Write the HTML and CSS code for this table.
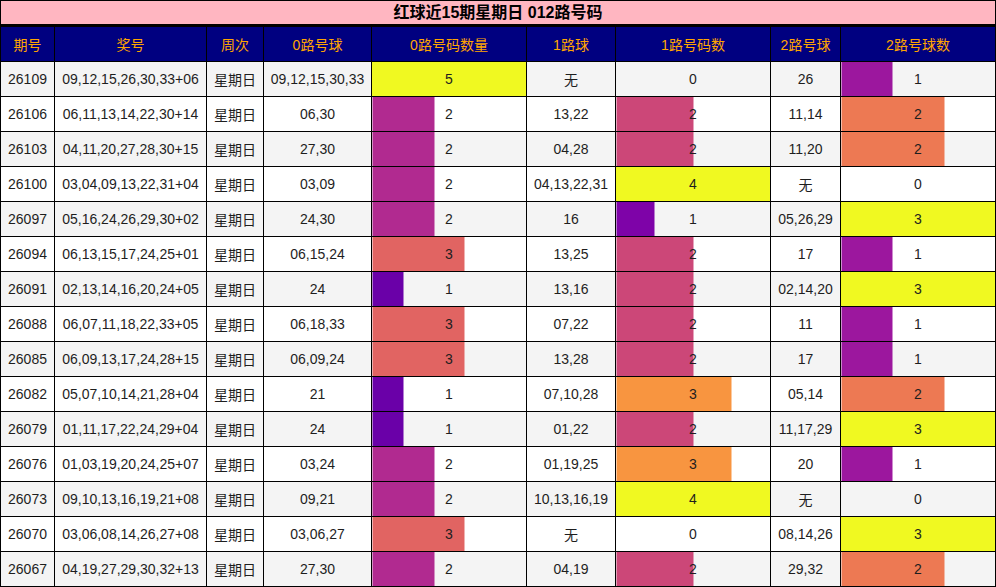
FILE: index.html
```html
<!DOCTYPE html>
<html lang="zh">
<head>
<meta charset="utf-8">
<title>红球近15期星期日 012路号码</title>
<link rel="stylesheet" href="styles.css">
</head>
<body>
<table class="grid">
  <colgroup>
    <col class="w-qh"><col class="w-jh"><col class="w-zc"><col class="w-b0">
    <col class="w-n0"><col class="w-b1"><col class="w-n1"><col class="w-b2"><col class="w-n2">
  </colgroup>
  <thead>
    <tr class="title-row"><th colspan="9">红球近15期星期日 012路号码</th></tr>
    <tr class="head-row">
      <th>期号</th><th>奖号</th><th>周次</th><th>0路号球</th><th>0路号码数量</th><th>1路球</th><th>1路号码数</th><th>2路号球</th><th>2路号球数</th>
    </tr>
  </thead>
  <tbody>
    <tr><td>26109</td><td>09,12,15,26,30,33+06</td><td>星期日</td><td>09,12,15,30,33</td><td class="bar p100">5</td><td>无</td><td class="bar">0</td><td>26</td><td class="bar p33">1</td></tr>
    <tr><td>26106</td><td>06,11,13,14,22,30+14</td><td>星期日</td><td>06,30</td><td class="bar p40">2</td><td>13,22</td><td class="bar p50">2</td><td>11,14</td><td class="bar p67">2</td></tr>
    <tr><td>26103</td><td>04,11,20,27,28,30+15</td><td>星期日</td><td>27,30</td><td class="bar p40">2</td><td>04,28</td><td class="bar p50">2</td><td>11,20</td><td class="bar p67">2</td></tr>
    <tr><td>26100</td><td>03,04,09,13,22,31+04</td><td>星期日</td><td>03,09</td><td class="bar p40">2</td><td>04,13,22,31</td><td class="bar p100">4</td><td>无</td><td class="bar">0</td></tr>
    <tr><td>26097</td><td>05,16,24,26,29,30+02</td><td>星期日</td><td>24,30</td><td class="bar p40">2</td><td>16</td><td class="bar p25">1</td><td>05,26,29</td><td class="bar p100">3</td></tr>
    <tr><td>26094</td><td>06,13,15,17,24,25+01</td><td>星期日</td><td>06,15,24</td><td class="bar p60">3</td><td>13,25</td><td class="bar p50">2</td><td>17</td><td class="bar p33">1</td></tr>
    <tr><td>26091</td><td>02,13,14,16,20,24+05</td><td>星期日</td><td>24</td><td class="bar p20">1</td><td>13,16</td><td class="bar p50">2</td><td>02,14,20</td><td class="bar p100">3</td></tr>
    <tr><td>26088</td><td>06,07,11,18,22,33+05</td><td>星期日</td><td>06,18,33</td><td class="bar p60">3</td><td>07,22</td><td class="bar p50">2</td><td>11</td><td class="bar p33">1</td></tr>
    <tr><td>26085</td><td>06,09,13,17,24,28+15</td><td>星期日</td><td>06,09,24</td><td class="bar p60">3</td><td>13,28</td><td class="bar p50">2</td><td>17</td><td class="bar p33">1</td></tr>
    <tr><td>26082</td><td>05,07,10,14,21,28+04</td><td>星期日</td><td>21</td><td class="bar p20">1</td><td>07,10,28</td><td class="bar p75">3</td><td>05,14</td><td class="bar p67">2</td></tr>
    <tr><td>26079</td><td>01,11,17,22,24,29+04</td><td>星期日</td><td>24</td><td class="bar p20">1</td><td>01,22</td><td class="bar p50">2</td><td>11,17,29</td><td class="bar p100">3</td></tr>
    <tr><td>26076</td><td>01,03,19,20,24,25+07</td><td>星期日</td><td>03,24</td><td class="bar p40">2</td><td>01,19,25</td><td class="bar p75">3</td><td>20</td><td class="bar p33">1</td></tr>
    <tr><td>26073</td><td>09,10,13,16,19,21+08</td><td>星期日</td><td>09,21</td><td class="bar p40">2</td><td>10,13,16,19</td><td class="bar p100">4</td><td>无</td><td class="bar">0</td></tr>
    <tr><td>26070</td><td>03,06,08,14,26,27+08</td><td>星期日</td><td>03,06,27</td><td class="bar p60">3</td><td>无</td><td class="bar">0</td><td>08,14,26</td><td class="bar p100">3</td></tr>
    <tr><td>26067</td><td>04,19,27,29,30,32+13</td><td>星期日</td><td>27,30</td><td class="bar p40">2</td><td>04,19</td><td class="bar p50">2</td><td>29,32</td><td class="bar p67">2</td></tr>
  </tbody>
</table>
</body>
</html>
```

FILE: styles.css
```css
html, body {
  margin: 0;
  padding: 0;
  background: #fff;
}

body {
  font-family: "Liberation Sans", "Noto Sans CJK SC", sans-serif;
  font-size: 14px;
  color: #1e1e1e;
}

.grid {
  width: 996px;
  table-layout: fixed;
  border-collapse: collapse;
  border: 1px solid #000;
}

.w-qh { width: 54px; }
.w-jh { width: 152px; }
.w-zc { width: 57px; }
.w-b0 { width: 108px; }
.w-n0 { width: 155px; }
.w-b1 { width: 89px; }
.w-n1 { width: 155px; }
.w-b2 { width: 70px; }
.w-n2 { width: 155px; }

.grid th,
.grid td {
  border: 1px solid #000;
  padding: 0;
  text-align: center;
  vertical-align: middle;
  white-space: nowrap;
}

.title-row th {
  background: #ffb6c1;
  color: #000;
  font-size: 16px;
  font-weight: bold;
  line-height: 18px;
  height: 23px;
  border-bottom: 3px solid #000;
}

.head-row th {
  background: #000080;
  color: #ffa500;
  font-weight: normal;
  height: 34px;
}

.grid tbody td {
  height: 34px;
}

.grid tbody tr:nth-child(odd) td {
  background-color: #f4f4f4;
}

.grid tbody tr:nth-child(even) td {
  background-color: #fff;
}

.grid tbody td.bar {
  background-image: linear-gradient(90deg, var(--c) var(--w), transparent var(--w));
}

.p20 { --c: #6a00a8; --w: 20%; }
.p25 { --c: #7e03a8; --w: 25%; }
.p33 { --c: #9c179e; --w: 33.333%; }
.p40 { --c: #b12a90; --w: 40%; }
.p50 { --c: #cc4778; --w: 50%; }
.p60 { --c: #e16462; --w: 60%; }
.p67 { --c: #ed7953; --w: 66.667%; }
.p75 { --c: #f89540; --w: 75%; }
.p100 { --c: #f0f921; --w: 100%; }
```
